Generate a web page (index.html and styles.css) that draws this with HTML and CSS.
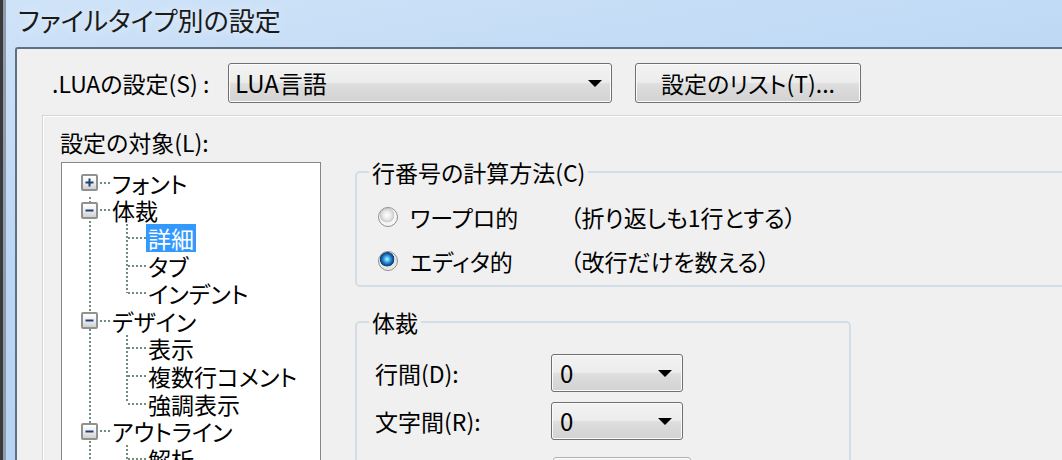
FILE: index.html
```html
<!DOCTYPE html>
<html lang="ja">

<head>
    <meta charset="UTF-8">
    <title>ファイルタイプ別の設定</title>
    <link rel="stylesheet" href="styles.css">
</head>

<body>
    <div class="window">
        <div class="titlebar">ファイルタイプ別の設定</div>
        <div class="client">
            <div class="top-row">
                <label class="top-label" for="langCombo">.LUAの設定(S) :</label>
                <div class="combo combo-wide" id="langCombo">
                    <span class="combo-text">LUA言語</span>
                    <span class="combo-arrow"></span>
                </div>
                <button class="push-button">設定のリスト(T)...</button>
            </div>

            <div class="panel">
                <div class="target-column">
                    <div class="target-label">設定の対象(L):</div>
                    <div class="tree">
                        <ul class="tree-root">
                            <li>
                                <div class="node">
                                    <svg class="expander" viewBox="0 0 13 13">
                                        <path d="M2.5 6.5h8M6.5 2.5v8" stroke="#1f3f78" stroke-width="2" fill="none" />
                                    </svg>
                                    <span class="hdots"></span>
                                    <span class="node-text">フォント</span>
                                </div>
                            </li>
                            <li>
                                <div class="node">
                                    <svg class="expander" viewBox="0 0 13 13">
                                        <path d="M2.5 6.5h8" stroke="#1f3f78" stroke-width="2" fill="none" />
                                    </svg>
                                    <span class="hdots"></span>
                                    <span class="node-text">体裁</span>
                                </div>
                                <ul class="tree-children">
                                    <li class="leaf"><span class="hdots leaf-dots"></span><span class="node-text selected">詳細</span></li>
                                    <li class="leaf"><span class="hdots leaf-dots"></span><span class="node-text">タブ</span></li>
                                    <li class="leaf"><span class="hdots leaf-dots"></span><span class="node-text">インデント</span></li>
                                </ul>
                            </li>
                            <li>
                                <div class="node">
                                    <svg class="expander" viewBox="0 0 13 13">
                                        <path d="M2.5 6.5h8" stroke="#1f3f78" stroke-width="2" fill="none" />
                                    </svg>
                                    <span class="hdots"></span>
                                    <span class="node-text">デザイン</span>
                                </div>
                                <ul class="tree-children">
                                    <li class="leaf"><span class="hdots leaf-dots"></span><span class="node-text">表示</span></li>
                                    <li class="leaf"><span class="hdots leaf-dots"></span><span class="node-text">複数行コメント</span></li>
                                    <li class="leaf"><span class="hdots leaf-dots"></span><span class="node-text">強調表示</span></li>
                                </ul>
                            </li>
                            <li>
                                <div class="node">
                                    <svg class="expander" viewBox="0 0 13 13">
                                        <path d="M2.5 6.5h8" stroke="#1f3f78" stroke-width="2" fill="none" />
                                    </svg>
                                    <span class="hdots"></span>
                                    <span class="node-text">アウトライン</span>
                                </div>
                                <ul class="tree-children">
                                    <li class="leaf"><span class="hdots leaf-dots"></span><span class="node-text">解析</span></li>
                                </ul>
                            </li>
                        </ul>
                    </div>
                </div>

                <div class="options-column">
                    <fieldset class="group group-lines">
                        <legend>行番号の計算方法(C)</legend>
                        <div class="radio-row">
                            <input type="radio" id="wordpro" name="lineCount">
                            <label class="radio-label" for="wordpro">ワープロ的</label>
                            <span class="radio-note">（折り返しも1行とする）</span>
                        </div>
                        <div class="radio-row">
                            <input type="radio" id="editor" name="lineCount" checked>
                            <label class="radio-label" for="editor">エディタ的</label>
                            <span class="radio-note">（改行だけを数える）</span>
                        </div>
                    </fieldset>

                    <fieldset class="group group-layout">
                        <legend>体裁</legend>
                        <div class="field-row">
                            <span class="field-label">行間(D):</span>
                            <div class="combo combo-small">
                                <span class="combo-text">0</span>
                                <span class="combo-arrow"></span>
                            </div>
                        </div>
                        <div class="field-row">
                            <span class="field-label">文字間(R):</span>
                            <div class="combo combo-small">
                                <span class="combo-text">0</span>
                                <span class="combo-arrow"></span>
                            </div>
                        </div>
                        <div class="field-row field-row-disabled">
                            <span class="field-label"><span class="checkbox"></span></span>
                            <div class="combo combo-disabled"></div>
                        </div>
                    </fieldset>
                </div>
            </div>
        </div>
    </div>
</body>

</html>
```

FILE: styles.css
```css
:root {
    --ui-font: "Noto Sans CJK JP", "Noto Sans", sans-serif;
    --tree-line: #6f8c7c;
    --group-border: #d3dde5;
}

html,
body {
    margin: 0;
    width: 1062px;
    height: 460px;
    overflow: hidden;
}

body {
    font-family: var(--ui-font);
    font-feature-settings: "palt";
    color: #000;
}

.window {
    display: flex;
    flex-direction: column;
    height: 460px;
    overflow: hidden;
    padding-left: 15px;
    background: linear-gradient(170deg, #cfe3f8 0%, #bcd7f4 40%, #b4d0f2 100%);
    box-shadow: inset 3px 0 #3b3b3b, inset 6px 0 #8e9bad;
}

.titlebar {
    flex-shrink: 0;
    height: 47px;
    padding-left: 3px;
    font-size: 26px;
    line-height: 39px;
    color: #1a1a1a;
    text-shadow: 0 0 10px rgba(255, 255, 255, 0.7);
    white-space: nowrap;
}

.client {
    flex: 1;
    min-height: 0;
    overflow: hidden;
    background-color: #f0f0f0;
    border-left: 2px solid #5e6f86;
    border-top: 2px solid #5e6f86;
    border-top-left-radius: 3px;
    font-size: 23px;
}

/* top row */

.top-row {
    display: flex;
    align-items: center;
    height: 40px;
    margin-top: 14px;
    padding-left: 35px;
}

.top-label {
    width: 176px;
    flex-shrink: 0;
    white-space: nowrap;
}

.combo {
    display: flex;
    flex-shrink: 0;
    align-items: center;
    justify-content: space-between;
    box-sizing: border-box;
    border: 1px solid #707070;
    border-radius: 3px;
    background: linear-gradient(#f3f3f3 0%, #ececec 48%, #dedede 52%, #d2d2d2 100%);
    box-shadow: inset 0 0 0 1px #fbfbfb;
}

.combo-wide {
    width: 384px;
    height: 40px;
    padding: 0 9px 0 6px;
    font-size: 24px;
}

.combo-text {
    line-height: 1;
}

.combo-arrow {
    width: 0;
    height: 0;
    border-left: 7px solid transparent;
    border-right: 7px solid transparent;
    border-top: 7px solid #000;
}

.push-button {
    flex-shrink: 0;
    width: 226px;
    height: 40px;
    margin-left: 23px;
    padding: 0;
    border: 1px solid #707070;
    border-radius: 3px;
    background: linear-gradient(#f3f3f3 0%, #ececec 48%, #dedede 52%, #d2d2d2 100%);
    box-shadow: inset 0 0 0 1px #fbfbfb;
    font-family: var(--ui-font);
    font-feature-settings: "palt";
    font-size: 23px;
    color: #000;
}

/* panel */

.panel {
    display: flex;
    margin-top: 12px;
    margin-left: 25px;
    height: 400px;
    padding-left: 18px;
    border-top: 1px solid #d6d6d6;
    border-left: 1px solid #d6d6d6;
    box-shadow: inset 1px 1px #ffffff;
}

.target-column {
    flex-shrink: 0;
    padding-top: 14px;
}

.target-label {
    height: 24px;
    line-height: 24px;
    margin-bottom: 8px;
    margin-left: -1px;
}

.tree {
    width: 260px;
    height: 330px;
    box-sizing: border-box;
    border: 1px solid #828790;
    background-color: #fff;
    padding-top: 6px;
}

.tree ul {
    list-style: none;
    margin: 0;
    padding: 0;
}

.tree-root {
    background: repeating-linear-gradient(to bottom, var(--tree-line) 0 2px, transparent 2px 4px) no-repeat 27px 28px / 2px 100%;
}

.tree-children {
    background: repeating-linear-gradient(to bottom, var(--tree-line) 0 2px, transparent 2px 4px) no-repeat 64px -4px / 2px calc(100% - 10px);
}

.node,
.leaf {
    display: flex;
    align-items: center;
    height: 27.6px;
}

.node {
    padding-left: 19px;
}

.leaf {
    padding-left: 64px;
}

.expander {
    display: block;
    flex-shrink: 0;
    width: 17px;
    height: 17px;
    box-sizing: border-box;
    border: 2px solid #919191;
    border-radius: 2px;
    background: linear-gradient(#ffffff 0%, #eeeeee 50%, #d0d0d0 100%);
}

.hdots {
    flex-shrink: 0;
    width: 10px;
    height: 2px;
    margin-left: 2px;
    background: repeating-linear-gradient(to right, var(--tree-line) 0 2px, transparent 2px 4px);
}

.leaf-dots {
    width: 18px;
}

.node-text {
    height: 28px;
    line-height: 28px;
    padding: 0 2px;
    white-space: nowrap;
}

.node-text.selected {
    background-color: #3399ff;
    color: #fff;
}

/* option groups */

.options-column {
    padding-top: 44px;
    margin-left: 34px;
}

.group {
    margin: 0;
    min-width: 0;
    border: 2px solid var(--group-border);
    border-radius: 5px;
}

.group legend {
    padding: 0 3px;
    height: 24px;
    line-height: 24px;
}

.group-lines {
    width: 800px;
    padding: 11px 0 2px 21px;
}

.group-lines legend {
    margin-left: -9px;
}

.radio-row {
    display: flex;
    align-items: center;
    height: 44px;
}

.radio-row input[type="radio"] {
    appearance: none;
    -webkit-appearance: none;
    flex-shrink: 0;
    width: 20px;
    height: 20px;
    margin: 0 12px 0 0;
    border: 1px solid #8e8f8f;
    border-radius: 50%;
    background: radial-gradient(circle at 45% 40%, #ffffff 0, #e9e9e9 4px, #cbcbcb 7px, #f6f6f6 7.5px, #f6f6f6 100%);
}

.radio-row input[type="radio"]:checked {
    background: radial-gradient(circle at 45% 40%, #c6f2ff 0, #3aa9e8 3px, #0d5ca8 5.5px, #1b3e6c 7px, #e2e2e2 7.5px, #f6f6f6 100%);
}

.radio-label {
    width: 160px;
    flex-shrink: 0;
    white-space: nowrap;
}

.radio-note {
    white-space: nowrap;
}

.group-layout {
    width: 496px;
    box-sizing: border-box;
    margin-top: 23px;
    padding: 20px 0 20px 18px;
}

.group-layout legend {
    margin-left: -6px;
}

.field-row {
    display: flex;
    align-items: center;
    height: 38px;
    margin-bottom: 10px;
}

.field-row-disabled {
    margin-top: 4px;
}

.field-label {
    width: 176px;
    flex-shrink: 0;
    white-space: nowrap;
}

.combo-small {
    width: 132px;
    height: 38px;
    padding: 0 10px 0 8px;
    font-size: 24px;
}

.checkbox {
    display: block;
    width: 25px;
    height: 25px;
    margin-left: 3px;
    margin-top: 8px;
    box-sizing: border-box;
    border: 2px solid #a5a5a5;
    background-color: #e8e8e8;
}

.combo-disabled {
    width: 138px;
    height: 38px;
    margin-left: 2px;
    margin-top: 14px;
    border-color: #adb2b5;
    background: #f4f4f4;
}
```
